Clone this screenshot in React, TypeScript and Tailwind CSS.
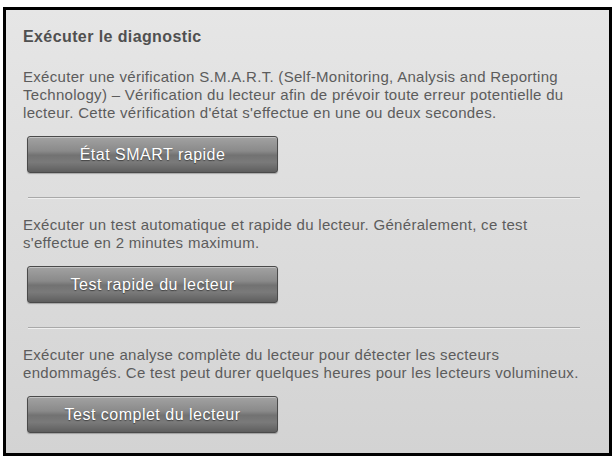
const sections = [
  {
    text: "Exécuter une vérification S.M.A.R.T. (Self-Monitoring, Analysis and Reporting Technology) – Vérification du lecteur afin de prévoir toute erreur potentielle du lecteur. Cette vérification d'état s'effectue en une ou deux secondes.",
    label: 'État SMART rapide',
  },
  {
    text: "Exécuter un test automatique et rapide du lecteur. Généralement, ce test s'effectue en 2 minutes maximum.",
    label: 'Test rapide du lecteur',
  },
  {
    text: 'Exécuter une analyse complète du lecteur pour détecter les secteurs endommagés. Ce test peut durer quelques heures pour les lecteurs volumineux.',
    label: 'Test complet du lecteur',
  },
]

function DiagButton({ label }: { label: string }) {
  return (
    <button className="ml-[4px] h-[37px] w-[251px] rounded-[3px] border border-[#4a4a4a] bg-[linear-gradient(to_bottom,#a2a2a2_0%,#8a8a8a_40%,#727272_52%,#7a7a7a_72%,#5e5e5e_100%)] text-[16px] tracking-[0.5px] text-white shadow-[inset_0_1px_0_rgba(255,255,255,0.35),0_1px_1px_rgba(0,0,0,0.25)] [text-shadow:0_1px_1px_rgba(0,0,0,0.45)]">
      {label}
    </button>
  )
}

export default function App() {
  return (
    <div className="h-[460px] w-[615px] bg-white pl-[3px] pt-[7px] font-['Liberation_Sans',Arial,sans-serif]">
      <div className="h-[449px] w-[609px] border-[3px] border-black bg-[linear-gradient(to_bottom,#e6e6e6,#d3d3d3)] pl-[17px] pr-[18px] pt-[18px]">
        <h1 className="text-[16px] font-bold leading-[18px] tracking-[0.4px] text-[#505050]">Exécuter le diagnostic</h1>
        {sections.map((s, i) => (
          <div key={s.label}>
            {i > 0 && <div className="ml-[5px] mr-[11px] mt-[24px] h-[2px] border-t border-b border-t-[#a9a9a9] border-b-[#efefef]" />}
            <p className={`${i === 0 ? 'mt-[22px]' : 'mt-[17px]'} text-[15px] leading-[18px] tracking-[0.3px] text-[#5c5c5c]`}>{s.text}</p>
            <div className="mt-[14px]">
              <DiagButton label={s.label} />
            </div>
          </div>
        ))}
      </div>
    </div>
  )
}
